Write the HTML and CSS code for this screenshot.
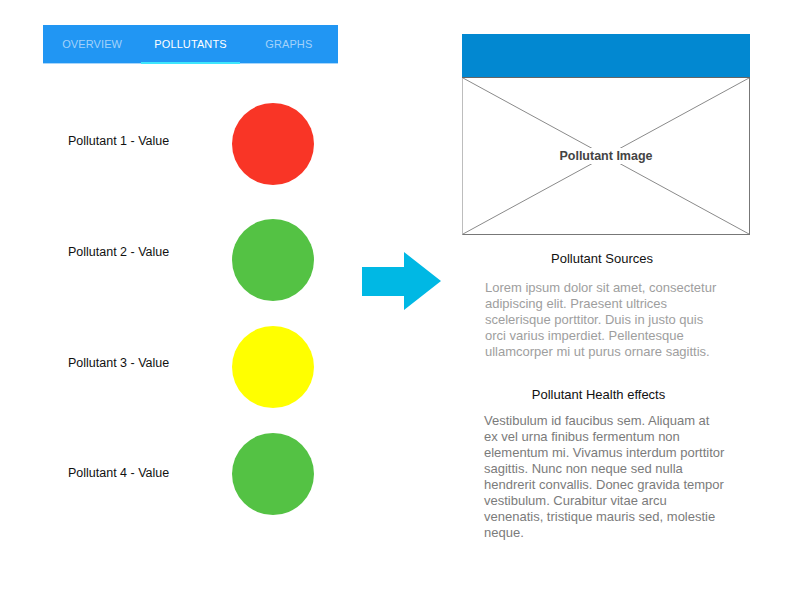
FILE: index.html
```html
<!DOCTYPE html>
<html>
<head>
<meta charset="utf-8">
<link rel="stylesheet" href="styles.css">
</head>
<body>
<div class="page">
  <div class="left">
    <nav class="tabs">
      <div class="tab">OVERVIEW</div>
      <div class="tab active">POLLUTANTS</div>
      <div class="tab">GRAPHS</div>
    </nav>
    <div class="rows">
      <div class="row r1"><span class="label">Pollutant 1 - Value</span><span class="dot red"></span></div>
      <div class="row r2"><span class="label">Pollutant 2 - Value</span><span class="dot green"></span></div>
      <div class="row r3"><span class="label">Pollutant 3 - Value</span><span class="dot yellow"></span></div>
      <div class="row r4"><span class="label">Pollutant 4 - Value</span><span class="dot green"></span></div>
    </div>
  </div>
  <svg class="arrow" width="79" height="58" viewBox="0 0 79 58">
    <polygon points="0,15 42,15 42,0 79,29 42,58 42,44 0,44" fill="#00b8e4"/>
  </svg>
  <div class="right">
    <div class="imgbox">
      <div class="imghead"></div>
      <div class="imgbody">
        <svg class="cross" viewBox="0 0 100 100" preserveAspectRatio="none">
          <line x1="0" y1="0" x2="100" y2="100" stroke="#8a8a8a" stroke-width="1" vector-effect="non-scaling-stroke"/>
          <line x1="100" y1="0" x2="0" y2="100" stroke="#8a8a8a" stroke-width="1" vector-effect="non-scaling-stroke"/>
        </svg>
        <span class="imglabel">Pollutant Image</span>
      </div>
    </div>
    <div class="section sources">
      <h2 class="heading">Pollutant Sources</h2>
      <p class="text light">Lorem ipsum dolor sit amet, consectetur<br>adipiscing elit. Praesent ultrices<br>scelerisque porttitor. Duis in justo quis<br>orci varius imperdiet. Pellentesque<br>ullamcorper mi ut purus ornare sagittis.</p>
    </div>
    <div class="section health">
      <h2 class="heading">Pollutant Health effects</h2>
      <p class="text dark">Vestibulum id faucibus sem. Aliquam at<br>ex vel urna finibus fermentum non<br>elementum mi. Vivamus interdum porttitor<br>sagittis. Nunc non neque sed nulla<br>hendrerit convallis. Donec gravida tempor<br>vestibulum. Curabitur vitae arcu<br>venenatis, tristique mauris sed, molestie<br>neque.</p>
    </div>
  </div>
</div>
</body>
</html>
```

FILE: styles.css
```css
html, body {
  margin: 0;
  padding: 0;
  background: #ffffff;
}
body {
  font-family: "Liberation Sans", Arial, sans-serif;
  color: #111;
}
.page {
  display: flex;
  align-items: flex-start;
  padding-left: 43px;
}
.left {
  width: 295px;
  padding-top: 25px;
}
.tabs {
  display: flex;
  background: #2196f3;
  border-bottom: 1px solid #a8d6fb;
}
.tab {
  position: relative;
  flex: 1;
  height: 38px;
  display: flex;
  align-items: center;
  justify-content: center;
  font-size: 11px;
  color: #a3d2fa;
  letter-spacing: 0.1px;
}
.tab.active {
  color: #ffffff;
}
.tab.active::after {
  content: "";
  position: absolute;
  left: 0;
  right: 0;
  bottom: -1px;
  height: 2px;
  background: #3fe6fc;
}
.rows {
  padding-left: 25px;
}
.row {
  display: flex;
  align-items: center;
}
.r1 { margin-top: 39px; }
.r2 { margin-top: 34px; }
.r3 { margin-top: 25px; }
.r4 { margin-top: 25px; }
.label {
  width: 164px;
  font-size: 12.5px;
  line-height: 16px;
  color: #111;
}
.r1 .label { margin-bottom: 7px; }
.r2 .label { margin-bottom: 17px; }
.r3 .label { margin-bottom: 9px; }
.r4 .label { margin-bottom: 3px; }
.dot {
  width: 82px;
  height: 82px;
  border-radius: 50%;
}
.red { background: #f93526; }
.green { background: #54c244; }
.yellow { background: #ffff00; }
.arrow {
  display: block;
  margin-left: 24px;
  margin-top: 252px;
  flex: none;
}
.right {
  margin-left: 21px;
  padding-top: 34px;
  width: 288px;
}
.imgbox {
  width: 288px;
  box-sizing: border-box;
}
.imghead {
  height: 44px;
  box-sizing: border-box;
  background: #0288d1;
  border-bottom: 1px solid #666;
}
.imgbody {
  position: relative;
  height: 157px;
  box-sizing: border-box;
  border-left: 1px solid #bdbdbd;
  border-right: 1px solid #777;
  border-bottom: 1px solid #777;
  display: flex;
  align-items: center;
  justify-content: center;
}
.cross {
  position: absolute;
  left: 0;
  top: 0;
  width: 100%;
  height: 100%;
}
.imglabel {
  position: relative;
  background: #fff;
  font-weight: bold;
  font-size: 12.5px;
  line-height: 16px;
  color: #444;
  padding: 0 1px;
}
.section {
  white-space: nowrap;
}
.sources {
  margin-left: 23px;
  width: 234px;
}
.health {
  margin-left: 22px;
  width: 229px;
}
.heading {
  margin: 16px 0 0 0;
  font-size: 13px;
  font-weight: normal;
  line-height: 16px;
  text-align: center;
  color: #111;
}
.health .heading {
  margin-top: 27px;
}
.text {
  margin: 13px 0 0 0;
  font-size: 13px;
  line-height: 16px;
}
.health .text {
  margin-top: 10px;
}
.light { color: #9e9e9e; }
.dark { color: #7b7b7b; }
```
